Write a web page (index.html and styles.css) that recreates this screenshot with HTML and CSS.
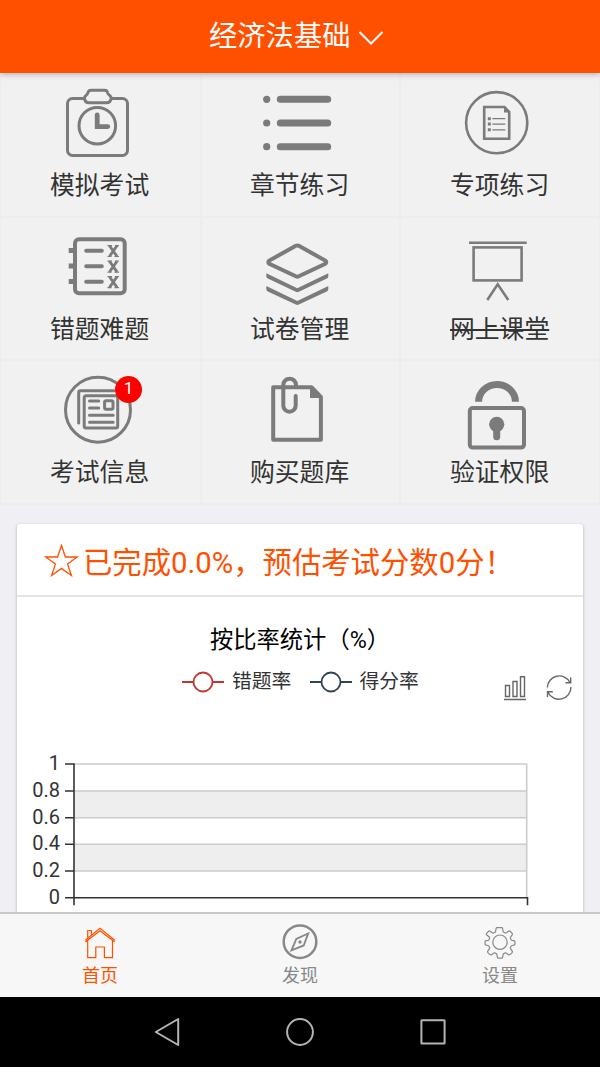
FILE: index.html
```html
<!DOCTYPE html>
<html lang="zh-CN">
<head>
<meta charset="utf-8">
<title>经济法基础</title>
<link rel="stylesheet" href="styles.css">
</head>
<body>
<div class="app">
  <header class="topbar">
    <span>经济法基础</span>
    <svg class="chevron" width="26" height="18" viewBox="0 0 26 18"><path d="M1.500 3 13 14.500 24.500 3"/></svg>
  </header>

  <main class="content">
    <section class="menu">
      <a class="cell">
        <svg class="icon" viewBox="0 0 100 92">
          <path d="M34 24.500H22.500a5 5 0 0 0-5 5v47a5 5 0 0 0 5 5h50a5 5 0 0 0 5-5v-47a5 5 0 0 0-5-5H61"/>
          <path d="M41 16.200h13.500q2.500 0 3 2.300.5 2 2.300 3 1.500 1 1.200 3.500-.6 3.800-4.500 3.800H39q-4 0-4.500-3.800-.2-2.500 1.400-3.500 1.600-1 2.100-3 .7-2.300 3-2.300z"/>
          <circle cx="47.300" cy="51.700" r="18.300"/>
          <path class="w5" d="M47.200 41v11.600h10.600"/>
        </svg>
        <span class="label">模拟考试</span>
      </a>
      <a class="cell">
        <svg class="icon" viewBox="0 0 100 92">
          <g class="solid"><circle cx="16.700" cy="25.300" r="3.600"/><circle cx="16.700" cy="49" r="3.600"/><circle cx="16.700" cy="72.700" r="3.600"/></g>
          <path class="w7 round" d="M30.300 25.300h47.400M30.300 49h47.400M30.300 72.700h47.400"/>
        </svg>
        <span class="label">章节练习</span>
      </a>
      <a class="cell">
        <svg class="icon" viewBox="0 0 100 92">
          <circle cx="46.700" cy="48.700" r="30.600" stroke-width="2.600"/>
          <path class="w2" d="M34.200 33h20.300l4.700 5v26.800H34.200z"/>
          <path class="solid" d="M54 32v6.500h6z"/>
          <path class="solid" d="M37.800 43.200h3v3h-3zM37.800 48.600h3v3h-3zM37.800 54.300h3v3h-3z"/>
          <path class="w1" d="M42.300 44.700h13M42.300 50.200h13M42.300 55.800h13"/>
        </svg>
        <span class="label">专项练习</span>
      </a>
      <a class="cell">
        <svg class="icon" viewBox="0 0 100 92">
          <rect class="w4" x="25" y="21.300" width="49.700" height="54" rx="4"/>
          <path class="solid" d="M18.700 30H24v5h-5.300zM18.700 45.500H24v5h-5.300zM18.700 61H24v5h-5.300z"/>
          <path class="w4 round" d="M36.200 32.700h15.600M36.200 48.300h15.600M36.200 63.700h15.600"/>
          <g id="marks">
            <path d="m59.500 27.700 7.500 10.600m0-10.600-7.500 10.600" stroke-width="2.800"/>
            <path class="w1" d="M57.500 27.600h4.600m2.800 0h4M57.500 38.500h4m3 0H69"/>
          </g>
          <use href="#marks" y="15.600"/>
          <use href="#marks" y="31.100"/>
        </svg>
        <span class="label">错题难题</span>
      </a>
      <a class="cell">
        <svg class="icon" viewBox="0 0 100 92">
          <path class="w4" d="M45.800 27.800 19.300 42.600q-2 1.700 0 3.200l26.500 12.500q1.500.7 3 0l26.500-12.500q2-1.500 0-3.200L48.800 27.800q-1.500-.8-3 0z"/>
          <path class="solid" d="M16.300 55.200 47.300 70.300 78.300 55.200v3q0 1.700-1.500 2.400L48.800 73.800q-1.500.7-3 0L17.800 60.600q-1.500-.7-1.500-2.400z"/>
          <path class="solid" d="M16.300 68 47.300 83.100 78.300 68v3q0 1.700-1.500 2.400L48.800 86.600q-1.500.7-3 0L17.800 73.400q-1.500-.7-1.500-2.400z"/>
        </svg>
        <span class="label">试卷管理</span>
      </a>
      <a class="cell">
        <svg class="icon" viewBox="0 0 100 92">
          <path class="w2" d="M19 24.700h57.700"/>
          <rect class="w2" x="23.600" y="29.400" width="48" height="33"/>
          <path class="w2" d="M37.300 82 47.700 66.300 58.300 82"/>
        </svg>
        <span class="label struck">网上课堂</span>
      </a>
      <a class="cell">
        <svg class="icon" viewBox="0 0 100 92">
          <circle cx="48" cy="48.700" r="32.500"/>
          <path class="round" d="M28.700 62V31.500q0-1.800 1.800-1.800H64"/>
          <rect x="34.200" y="34.800" width="33.500" height="32.200" rx="2"/>
          <path class="round" d="M39.500 40h9.200M39.500 47h9.200M39.500 54.300h23.700M39.500 61.300h23.700"/>
          <rect x="54.600" y="39.800" width="8.400" height="8.400" rx="1.500"/>
        </svg>
        <span class="badge">1</span>
        <span class="label">考试信息</span>
      </a>
      <a class="cell">
        <svg class="icon" viewBox="0 0 100 92">
          <path class="w4 join" d="M23.200 26.200h38.300l9.400 9.600v43H23.200z"/>
          <path class="solid" d="M60 25v12h12z"/>
          <path class="w4 round" d="M46 26v-2a6.300 6.300 0 0 0-12.700 0v20.500a6.200 6.200 0 0 0 12.400 0V35"/>
        </svg>
        <span class="label">购买题库</span>
      </a>
      <a class="cell">
        <svg class="icon" viewBox="0 0 100 92">
          <rect class="w4" x="19.800" y="47" width="54.200" height="39.600" rx="3"/>
          <path class="w7" d="M28.600 40.800a18.400 17.300 0 0 1 36.800 0"/>
          <circle class="solid" cx="46.700" cy="63.300" r="7.600"/>
          <path class="w7 round" d="M46.700 65v10.800"/>
        </svg>
        <span class="label">验证权限</span>
      </a>
    </section>

    <section class="card">
      <h2 class="summary">
        <svg class="star" width="36" height="34" viewBox="0 0 36 34"><path d="m17.500 2.500 3.900 11.500h11.800l-9.600 7.100 3.800 11.400L17.500 25.400 7.600 32.500l3.800-11.400L1.800 14h11.800z"/></svg>
        <span>已完成0.0%，预估考试分数0分！</span>
      </h2>
      <h3 class="chart-title">按比率统计（%）</h3>
      <div class="legend">
        <span class="series"><svg class="red" width="42" height="22" viewBox="0 0 42 22"><path d="M0 11h42"/><circle cx="21" cy="11" r="9.500"/></svg>错题率</span>
        <span class="series"><svg class="navy" width="42" height="22" viewBox="0 0 42 22"><path d="M0 11h42"/><circle cx="21" cy="11" r="9.500"/></svg>得分率</span>
        <span class="tools">
          <svg width="24" height="28" viewBox="0 0 24 28"><path d="M2.500 12.500h4v11h-4zM10 8.500h4v15h-4zM17.500 3.700h4v19.800h-4zM1 26.500h22"/></svg>
          <svg width="28" height="28" viewBox="0 0 28 28"><path d="M2.300 14.500A12 12 0 0 1 25 9.500M20.500 9.800h5.200V4.600M25.900 14a12 12 0 0 1-22.800 5.500M7.800 18.700H2.500V24"/></svg>
        </span>
      </div>
      <svg class="plot" viewBox="0 0 566 190">
        <path class="band" d="M57 51h452.700v26.700H57zM57 104.300h452.700V131H57z"/>
        <path class="grid" d="M57 24h452.700v133.700M57 51h452.700M57 77.700h452.700M57 104.300h452.700M57 131h452.700"/>
        <path class="axis" d="M57 23.200v142M48 24h9M48 51h9M48 77.700h9M48 104.300h9M48 131h9M48 157.700h462.500v7.500"/>
        <g class="ticks">
          <text x="43" y="30">1</text><text x="43" y="57">0.8</text><text x="43" y="83.700">0.6</text>
          <text x="43" y="110.300">0.4</text><text x="43" y="137">0.2</text><text x="43" y="163.700">0</text>
        </g>
      </svg>
    </section>
  </main>

  <nav class="tabs">
    <a class="tab active">
      <svg width="40" height="40" viewBox="0 0 40 40"><path d="M5.300 17.200 20 5.200l14.700 12M5.300 19 20 7.800 34.700 19M7.700 17.500v17.200h8.100V24h8.600v10.700h8.100V17.500M7.700 15V7.500h3.800v4.300"/></svg>
      <span>首页</span>
    </a>
    <a class="tab">
      <svg width="40" height="40" viewBox="0 0 40 40"><circle class="thick" cx="20" cy="18.700" r="16.300"/><path class="mid" d="m28.200 10.500-4.500 12-12.200 4.800 4.800-11.300z"/><circle class="dot" cx="20" cy="19" r="1.700"/></svg>
      <span>发现</span>
    </a>
    <a class="tab">
      <svg width="40" height="40" viewBox="0 0 40 40"><circle cx="20" cy="19.200" r="7.200"/><path d="M18.300 4.700h3.400q.8 0 .9.800l.5 2.800q.2.900 1 1.200l.9.400q.8.300 1.500-.2l2.100-1.500q.8-.5 1.500.1l2 2q.6.700.1 1.500l-1.500 2.200q-.5.700-.2 1.500l.4.900q.3.800 1.200 1l2 .3q.8.100.8.900v2.600q0 .8-.8.900l-2 .4q-.9.200-1.200 1l-.4.900q-.3.800.2 1.500l1.500 2.200q.5.800-.1 1.500l-2 2q-.7.600-1.500.1l-2.100-1.500q-.7-.5-1.500-.2l-.9.400q-.8.300-1 1.200l-.5 2.800q-.1.800-.9.800h-3.400q-.8 0-.9-.8l-.5-2.800q-.2-.9-1-1.200l-.9-.4q-.8-.3-1.500.2l-2.100 1.500q-.8.500-1.500-.1l-2-2q-.6-.7-.1-1.500l1.500-2.200q.5-.7.200-1.500l-.4-.9q-.3-.8-1.200-1l-2-.4q-.8-.1-.8-.9v-2.600q0-.8.800-.9l2-.3q.9-.2 1.200-1l.4-.9q.3-.8-.2-1.500L6.500 11.800q-.5-.8.100-1.500l2-2q.7-.6 1.500-.1l2.100 1.500q.7.500 1.500.2l.9-.4q.8-.3 1-1.200l.5-2.800q.1-.8.900-.8z"/></svg>
      <span>设置</span>
    </a>
  </nav>

  <footer class="system">
    <svg width="30" height="30" viewBox="0 0 30 30"><path d="M3.800 15 26.200 2v26z"/></svg>
    <svg width="30" height="30" viewBox="0 0 30 30"><circle cx="15" cy="15" r="12.900"/></svg>
    <svg width="30" height="30" viewBox="0 0 30 30"><rect x="3.400" y="3.300" width="23.200" height="23.200" rx=".5"/></svg>
  </footer>
</div>
</body>
</html>
```
FILE: styles.css
```css
* { box-sizing: border-box; }

body {
  margin: 0;
  font-family: Roboto, "Noto Sans CJK SC", sans-serif;
  color: #333;
}

svg { display: block; fill: none; flex: none; }

.app {
  display: flex;
  flex-direction: column;
  width: 600px;
  height: 1067px;
  overflow: hidden;
  background: #efeff4;
}

.topbar {
  display: flex;
  align-items: center;
  gap: 7px;
  flex: none;
  height: 73px;
  padding: 0 0 7px 209px;
  background: #ff5000;
  color: #fff;
  font-size: 28.3px;
  z-index: 1;
  box-shadow: 0 1px 6px rgba(0, 0, 0, .3);
}

.chevron { stroke: #fff; stroke-width: 2; margin-top: 9px; }

.content {
  flex: 1;
  min-height: 0;
  overflow: hidden;
  padding-top: 1px;
}

.menu {
  display: grid;
  grid-template-columns: 201px 199px 200px;
  grid-template-rows: 144px 143px 144px;
  background: #f1f1f1;
  border-left: 1px solid #ededed;
}

.cell {
  position: relative;
  border-right: 2px solid #ededed;
  border-bottom: 2px solid #ededed;
}

.cell:nth-child(3n + 1) { padding-left: 49px; }
.cell:nth-child(3n + 2) { padding-left: 48px; }
.cell:nth-child(3n) { padding-left: 49px; }

.icon {
  width: 100px;
  height: 92px;
  stroke: #7b7b7b;
  stroke-width: 3;
}

.icon .solid { fill: #7b7b7b; stroke: none; }
.w1 { stroke-width: 1.2; }
.w2 { stroke-width: 2.6; }
.w4 { stroke-width: 4; }
.w5 { stroke-width: 4.8; stroke-linecap: round; }
.w7 { stroke-width: 7; }
.round { stroke-linecap: round; }
.join { stroke-linejoin: round; }

.label {
  display: block;
  width: 100px;
  padding-top: 2px;
  font-size: 24.8px;
  line-height: 36px;
  white-space: nowrap;
}

.struck { text-decoration: line-through; text-decoration-thickness: 1.5px; }

.badge {
  position: absolute;
  left: 114px;
  top: 15px;
  width: 27px;
  height: 27px;
  border-radius: 50%;
  background: #f00;
  color: #fff;
  font-size: 17px;
  line-height: 24px;
  text-align: center;
}

.card {
  margin: 19px 17px 0;
  height: 420px;
  background: #fff;
  border-radius: 3px;
  box-shadow: 0 1px 3px rgba(0, 0, 0, .3);
}

.summary {
  display: flex;
  align-items: center;
  gap: 3px;
  height: 73px;
  margin: 0;
  padding: 0 0 0 27px;
  border-bottom: 2px solid #e3e3e3;
  color: #ff5000;
  font-size: 29.350px;
  font-weight: 400;
  white-space: nowrap;
}

.star { stroke: #ff5000; stroke-width: 1.3; }

.chart-title {
  margin: 25px 0 0;
  color: #000;
  font-size: 23.300px;
  font-weight: 400;
  line-height: 36px;
  text-align: center;
}

.legend {
  display: flex;
  height: 82px;
  padding: 10px 10px 0 165px;
  font-size: 19.8px;
  line-height: 28px;
}

.series { display: flex; gap: 8px; width: 127.500px; white-space: nowrap; }
.series svg { margin-top: 3px; stroke-width: 1.8; }
.series circle { fill: #fff; }
.red { stroke: #c23531; }
.navy { stroke: #2f4554; }

.tools {
  display: flex;
  gap: 18px;
  margin: 5px 0 0 auto;
  stroke: #666;
  stroke-width: 1.4;
}

.plot { width: 566px; height: 190px; }
.band { fill: #eee; }
.grid { stroke: #ccc; stroke-width: 1.6; }
.axis { stroke: #333; stroke-width: 1.6; }
.ticks { fill: #333; font-size: 20px; text-anchor: end; }

.tabs {
  display: grid;
  grid-template-columns: repeat(3, 1fr);
  flex: none;
  height: 85px;
  border-top: 2px solid #c8c8c8;
  background: #f7f7f7;
  z-index: 1;
}

.tab {
  display: flex;
  flex-direction: column;
  align-items: center;
  gap: 1px;
  padding-top: 9px;
  color: #888;
  font-size: 18px;
  line-height: 24px;
}

.tab svg { stroke: currentColor; stroke-width: 1.2; }
.active { color: #ff5000; }
.tab .thick { stroke-width: 2.5; }
.tab .mid { stroke-width: 1.9; }
.tab .dot { fill: #888; stroke: none; }

.system {
  display: grid;
  grid-template-columns: repeat(3, 1fr);
  place-items: center;
  flex: none;
  height: 70px;
  padding: 0 100px;
  background: #000;
  stroke: #b4b4b4;
  stroke-width: 2;
  stroke-linejoin: round;
}
```
